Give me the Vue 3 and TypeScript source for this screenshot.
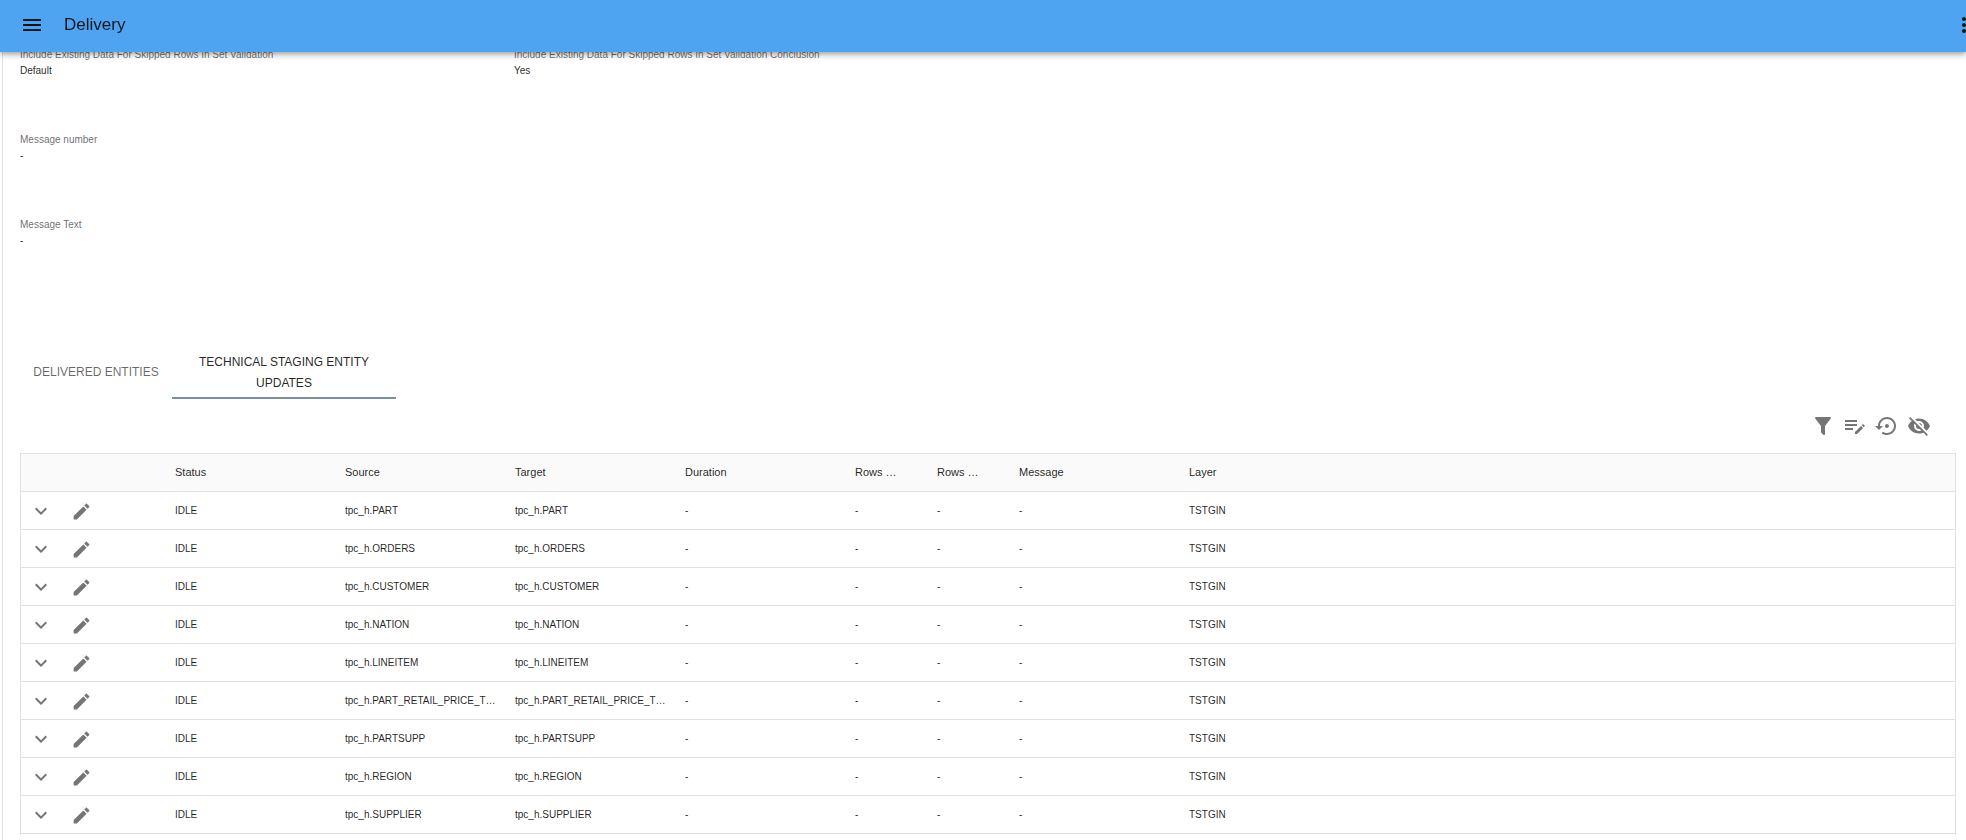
<script setup lang="ts">
import { ref } from 'vue'

interface Field {
  label: string
  value: string
}

interface EntityUpdate {
  status: string
  entity: string
  layer: string
}

interface Tool {
  label: string
  path: string
}

const fieldRows: Field[][] = [
  [
    { label: 'Include Existing Data For Skipped Rows In Set Validation', value: 'Default' },
    { label: 'Include Existing Data For Skipped Rows In Set Validation Conclusion', value: 'Yes' },
  ],
  [{ label: 'Message number', value: '-' }],
  [{ label: 'Message Text', value: '-' }],
]

const tabs = ['Delivered Entities', 'Technical Staging Entity Updates']
const activeTab = ref(1)

const headings = ['Status', 'Source', 'Target', 'Duration', 'Rows …', 'Rows …', 'Message', 'Layer']

const updates: EntityUpdate[] = [
  'PART',
  'ORDERS',
  'CUSTOMER',
  'NATION',
  'LINEITEM',
  'PART_RETAIL_PRICE_T…',
  'PARTSUPP',
  'REGION',
  'SUPPLIER',
].map((name) => ({ status: 'IDLE', entity: `tpc_h.${name}`, layer: 'TSTGIN' }))

const tools: Tool[] = [
  {
    label: 'Filter',
    path: 'M14,12V19.88C14.04,20.18 13.94,20.5 13.71,20.71C13.32,21.1 12.69,21.1 12.3,20.71L10.29,18.7C10.06,18.47 9.96,18.16 10,17.87V12H9.97L4.21,4.62C3.87,4.19 3.95,3.56 4.38,3.22C4.57,3.08 4.78,3 5,3H19C19.22,3 19.43,3.08 19.62,3.22C20.05,3.56 20.13,4.19 19.79,4.62L14.03,12H14Z',
  },
  {
    label: 'Edit columns',
    path: 'M2,6V8H14V6H2M2,10V12H14V10H2M20.04,10.13C19.9,10.13 19.76,10.19 19.65,10.3L18.65,11.3L20.7,13.35L21.7,12.35C21.92,12.14 21.92,11.79 21.7,11.58L20.42,10.3C20.31,10.19 20.18,10.13 20.04,10.13M18.07,11.88L12,17.94V20H14.06L20.12,13.93L18.07,11.88M2,14V16H10V14H2Z',
  },
  {
    label: 'Restore',
    path: 'M14 12c0-1.1-.9-2-2-2s-2 .9-2 2 .9 2 2 2 2-.9 2-2zm-2-9c-4.97 0-9 4.03-9 9H0l4 4 4-4H5c0-3.87 3.13-7 7-7s7 3.13 7 7-3.13 7-7 7c-1.51 0-2.91-.49-4.06-1.3l-1.42 1.44C8.04 20.3 9.94 21 12 21c4.97 0 9-4.03 9-9s-4.03-9-9-9z',
  },
  {
    label: 'Hide',
    path: 'M11.83,9L15,12.16C15,12.11 15,12.05 15,12A3,3 0 0,0 12,9C11.94,9 11.89,9 11.83,9M7.53,9.8L9.08,11.35C9.03,11.56 9,11.77 9,12A3,3 0 0,0 12,15C12.22,15 12.44,14.97 12.65,14.92L14.2,16.47C13.53,16.8 12.79,17 12,17A5,5 0 0,1 7,12C7,11.21 7.2,10.47 7.53,9.8M2,4.27L4.28,6.55L4.73,7C3.08,8.3 1.78,10 1,12C2.73,16.39 7,19.5 12,19.5C13.55,19.5 15.03,19.2 16.38,18.66L16.81,19.08L19.73,22L21,20.73L3.27,3M12,7A5,5 0 0,1 17,12C17,12.64 16.87,13.26 16.64,13.82L19.57,16.75C21.07,15.5 22.27,13.86 23,12C21.27,7.61 17,4.5 12,4.5C10.6,4.5 9.26,4.75 8,5.2L10.17,7.35C10.74,7.13 11.35,7 12,7Z',
  },
]
</script>

<template>
  <div class="page">
    <header class="app-bar">
      <button class="icon-button" type="button" aria-label="Menu">
        <svg class="icon" viewBox="0 0 24 24"><path d="M3 18h18v-2H3v2zm0-5h18v-2H3v2zm0-7v2h18V6H3z" /></svg>
      </button>
      <h1 class="title">Delivery</h1>
      <button class="icon-button more" type="button" aria-label="More">
        <svg class="icon" viewBox="0 0 24 24">
          <path d="M12 8c1.1 0 2-.9 2-2s-.9-2-2-2-2 .9-2 2 .9 2 2 2zm0 2c-1.1 0-2 .9-2 2s.9 2 2 2 2-.9 2-2-.9-2-2-2zm0 6c-1.1 0-2 .9-2 2s.9 2 2 2 2-.9 2-2-.9-2-2-2z" />
        </svg>
      </button>
    </header>

    <main class="content">
      <section class="fields">
        <dl v-for="(row, r) in fieldRows" :key="r" class="field-row">
          <div v-for="field in row" :key="field.label">
            <dt>{{ field.label }}</dt>
            <dd>{{ field.value }}</dd>
          </div>
        </dl>
      </section>

      <div class="tabs" role="tablist">
        <button
          v-for="(tab, i) in tabs"
          :key="tab"
          class="tab"
          :class="{ active: i === activeTab }"
          type="button"
          role="tab"
          :aria-selected="i === activeTab"
          @click="activeTab = i"
        >
          {{ tab }}
        </button>
      </div>

      <div class="toolbar">
        <button v-for="tool in tools" :key="tool.label" class="icon-button" type="button" :aria-label="tool.label">
          <svg class="icon" viewBox="0 0 24 24"><path :d="tool.path" /></svg>
        </button>
      </div>

      <div class="grid-frame">
        <table class="grid">
          <colgroup>
            <col class="col-expand" />
            <col class="col-edit" />
            <col class="col-wide" span="4" />
            <col class="col-count" span="2" />
            <col class="col-wide" />
            <col />
          </colgroup>
          <thead>
            <tr>
              <td></td>
              <td></td>
              <th v-for="(heading, h) in headings" :key="h" scope="col">{{ heading }}</th>
            </tr>
          </thead>
          <tbody>
            <tr v-for="update in updates" :key="update.entity">
              <td class="action">
                <button class="icon-button" type="button" :aria-label="`Expand ${update.entity}`">
                  <svg class="icon" viewBox="0 0 24 24"><path d="M7.41 8.59 12 13.17l4.59-4.58L18 10l-6 6-6-6z" /></svg>
                </button>
              </td>
              <td class="action">
                <button class="icon-button" type="button" :aria-label="`Edit ${update.entity}`">
                  <svg class="icon pencil" viewBox="0 0 24 24">
                    <path d="M3 17.25V21h3.75L17.81 9.94l-3.75-3.75L3 17.25zM20.71 7.04c.39-.39.39-1.02 0-1.41l-2.34-2.34c-.39-.39-1.02-.39-1.41 0l-1.83 1.83 3.75 3.75 1.83-1.83z" />
                  </svg>
                </button>
              </td>
              <td>{{ update.status }}</td>
              <td>{{ update.entity }}</td>
              <td>{{ update.entity }}</td>
              <td>-</td>
              <td>-</td>
              <td>-</td>
              <td>-</td>
              <td>{{ update.layer }}</td>
            </tr>
          </tbody>
        </table>
      </div>
    </main>
  </div>
</template>

<style>
body {
  background: #fff;
}
</style>

<style scoped>
.page {
  display: flex;
  min-height: 100vh;
  box-sizing: border-box;
  padding-left: 2px;
  color: rgba(0, 0, 0, 0.87);
  font-family: "Liberation Sans", Arial, Helvetica, sans-serif;
  font-size: 10px;
  line-height: 16px;
}

.app-bar {
  position: fixed;
  top: 0;
  left: 0;
  right: 0;
  z-index: 1;
  display: flex;
  align-items: center;
  box-sizing: border-box;
  height: 52px;
  padding: 0 0 2px 16px;
  overflow: hidden;
  background: #4ea4f0;
  box-shadow:
    0 2px 4px -1px rgba(0, 0, 0, 0.2),
    0 4px 5px 0 rgba(0, 0, 0, 0.14),
    0 1px 10px 0 rgba(0, 0, 0, 0.12);
}

.title {
  flex: 1;
  margin: 0 0 0 16px;
  font-size: 17px;
  font-weight: 400;
  line-height: 26px;
}

.icon-button {
  flex: none;
  display: flex;
  align-items: center;
  justify-content: center;
  width: 32px;
  height: 32px;
  padding: 0;
  border: 0;
  background: none;
  color: rgba(0, 0, 0, 0.54);
  cursor: pointer;
}

.app-bar .icon-button {
  color: inherit;
}

.app-bar .more {
  margin-right: -14px;
}

.icon {
  display: block;
  width: 24px;
  height: 24px;
  fill: currentColor;
}

.pencil {
  width: 21px;
  height: 21px;
}

.content {
  flex: 1;
  min-width: 0;
  padding: 47px 10px 0 17px;
  border-left: 1px solid #e0e0e0;
}

.fields {
  margin-bottom: 45px;
}

.field-row {
  display: grid;
  grid-template-columns: repeat(4, minmax(0, 1fr));
  column-gap: 40px;
  min-height: 85px;
  margin: 0;
}

dt {
  color: rgba(0, 0, 0, 0.6);
  white-space: nowrap;
}

dd {
  margin: 0;
}

.tabs {
  display: flex;
  height: 52px;
}

.tab {
  box-sizing: border-box;
  min-width: 152px;
  max-width: 224px;
  padding: 1px 10px 0;
  border: 0;
  border-bottom: 2px solid transparent;
  background: none;
  color: rgba(0, 0, 0, 0.6);
  font: inherit;
  font-size: 12px;
  line-height: 21px;
  text-transform: uppercase;
  cursor: pointer;
}

.tab.active {
  border-bottom-color: #78909c;
  color: rgba(0, 0, 0, 0.87);
}

.toolbar {
  display: flex;
  justify-content: flex-end;
  padding: 11px 21px;
}

.grid-frame {
  padding-bottom: 1px;
  border: solid #e0e0e0;
  border-width: 1px 1px 0;
}

.grid {
  width: 100%;
  border-collapse: separate;
  border-spacing: 0;
  table-layout: fixed;
}

.col-expand {
  width: 40px;
}

.col-edit {
  width: 106px;
}

.col-wide {
  width: 170px;
}

.col-count {
  width: 82px;
}

.grid th,
.grid td {
  box-sizing: border-box;
  height: 38px;
  padding: 1px 8px 0;
  border-bottom: 1px solid #e0e0e0;
  overflow: hidden;
  text-align: left;
  text-overflow: ellipsis;
  white-space: nowrap;
}

.grid thead {
  background: #fafafa;
}

.grid th {
  padding: 0 8px 1px;
  font-size: 11px;
  font-weight: 400;
}

.grid .action {
  padding: 1px 4px 0;
}
</style>
